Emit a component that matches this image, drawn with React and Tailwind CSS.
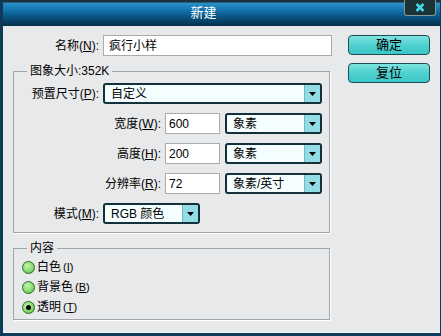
const FONT = { fontFamily: '"Liberation Sans", "Noto Sans CJK SC", sans-serif' };

const Key = ({ k }) => <span className="underline underline-offset-1">{k}</span>;

const Arrow = () => (
  <div className="w-[16px] self-stretch bg-[#93dce5] border-l border-[#6fb9c4] flex items-center justify-center">
    <svg width="7" height="4" viewBox="0 0 7 4">
      <path d="M0 0h7L3.5 4z" fill="#000" />
    </svg>
  </div>
);

const Select = ({ value, className }) => (
  <div
    className={`h-[21px] flex items-stretch bg-[#f4feff] border-2 border-[#14303a] rounded-[3px] overflow-hidden ${className}`}
  >
    <div className="flex-1 flex items-center pl-[6px] text-[12px] text-black">{value}</div>
    <Arrow />
  </div>
);

const TextBox = ({ value, className }) => (
  <div
    className={`h-[21px] flex items-center bg-white border border-[#a9acae] pl-[3px] text-[12px] text-black ${className}`}
  >
    {value}
  </div>
);

const Button = ({ label }) => (
  <div className="w-[82px] h-[20px] flex items-center justify-center rounded-[4px] border border-[#1e4c52] bg-[linear-gradient(to_bottom,#7fe4e0,#4fd0cf_50%,#3cc6c8)] text-[13px] text-black">
    {label}
  </div>
);

const Radio = ({ checked, label, k }) => (
  <div className="h-[20px] flex items-center gap-[2px] pl-[8px]">
    <div className="w-[13px] h-[13px] rounded-full border border-[#2f6b2b] bg-[radial-gradient(circle_at_40%_35%,#c4f5ac,#7fd86a_60%,#4fb13e)] flex items-center justify-center">
      {checked && <div className="w-[5px] h-[5px] rounded-full bg-black" />}
    </div>
    <span className="text-[12px] text-black">
      {label}
      <span className="ml-[2px] text-[11px]">
        (<Key k={k} />)
      </span>
    </span>
  </div>
);

const Row = ({ label, k, labelWidth, children }) => (
  <div className="h-[21px] flex items-center">
    <div className="text-right text-[12px] text-black pr-[4px]" style={{ width: labelWidth }}>
      {label}(<Key k={k} />):
    </div>
    {children}
  </div>
);

export default function App() {
  return (
    <div
      className="w-[441px] h-[336px] flex flex-col bg-[#0b3551] border-l-[3px] border-r border-b-[3px] border-[#0c3a58] overflow-hidden"
      style={FONT}
    >
      {/* title bar */}
      <div className="h-[26px] flex bg-[linear-gradient(to_bottom,#1c2f3a_0px,#1c2f3a_2px,#2a90c6_3px,#1679b2_9px,#0b5b8e_15px,#073f63_22px,#052e48_26px)]">
        <div className="flex-1 flex items-center justify-center text-[13px] text-white">新建</div>
        <div className="w-[32px] h-[16px] mr-[4px] flex items-center justify-center bg-[#1c3336] border border-t-0 border-[#7d9a9d] rounded-b-[3px]">
          <svg width="10" height="9" viewBox="0 0 10 9">
            <path d="M1.5 1l7 7M8.5 1l-7 7" stroke="#45d8e8" strokeWidth="2.6" />
          </svg>
        </div>
      </div>

      {/* body */}
      <div className="flex-1 flex bg-[#e8e9ea] border-b border-[#f3f6f8] pt-[9px] pl-[10px]">
        <div className="w-[319px] flex flex-col">
          <div className="h-[21px] flex items-center">
            <div className="w-[90px] pr-[4px] text-right text-[12px] text-black">
              名称(<Key k="N" />):
            </div>
            <TextBox value="疯行小样" className="w-[229px] pl-[5px]" />
          </div>

          <fieldset className="mt-[7px] mr-[2px] border border-[#a3a6a9] shadow-[1px_1px_0_#ffffff]">
            <legend className="ml-[13px] px-[3px] h-[16px] leading-[16px] text-[12px] text-black">
              图象大小:352K
            </legend>
            <div className="flex flex-col gap-[9px] pt-[4px] pb-[8px]">
              <Row label="预置尺寸" k="P" labelWidth={89}>
                <Select value="自定义" className="w-[219px]" />
              </Row>
              <Row label="宽度" k="W" labelWidth={151}>
                <TextBox value="600" className="w-[55px]" />
                <Select value="象素" className="w-[97px] ml-[5px]" />
              </Row>
              <Row label="高度" k="H" labelWidth={151}>
                <TextBox value="200" className="w-[55px]" />
                <Select value="象素" className="w-[97px] ml-[5px]" />
              </Row>
              <Row label="分辨率" k="R" labelWidth={151}>
                <TextBox value="72" className="w-[55px]" />
                <Select value="象素/英寸" className="w-[97px] ml-[5px]" />
              </Row>
              <Row label="模式" k="M" labelWidth={89}>
                <Select value="RGB 颜色" className="w-[97px]" />
              </Row>
            </div>
          </fieldset>

          <fieldset className="mt-[7px] mr-[2px] border border-[#a3a6a9] shadow-[1px_1px_0_#ffffff]">
            <legend className="ml-[13px] px-[3px] h-[16px] leading-[16px] text-[12px] text-black">
              内容
            </legend>
            <div className="flex flex-col pt-[1px] pb-[2px]">
              <Radio label="白色" k="I" />
              <Radio label="背景色" k="B" />
              <Radio label="透明" k="T" checked />
            </div>
          </fieldset>
        </div>

        <div className="ml-[16px] flex flex-col gap-[8px]">
          <Button label="确定" />
          <Button label="复位" />
        </div>
      </div>
    </div>
  );
}
